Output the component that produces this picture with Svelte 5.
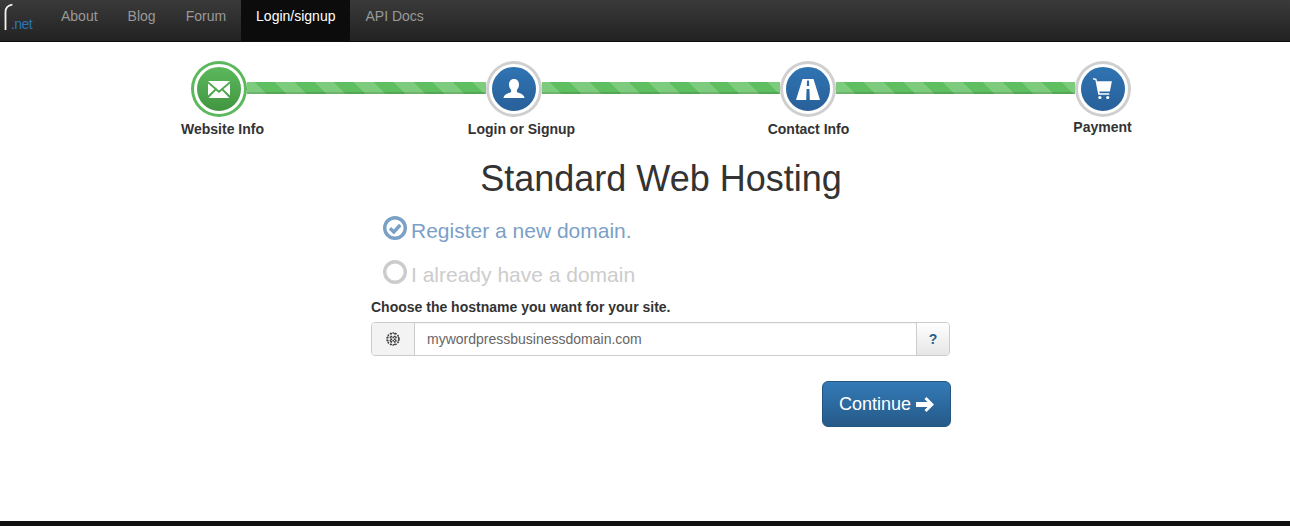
<script>
  const links = [
    { label: 'About' },
    { label: 'Blog' },
    { label: 'Forum' },
    { label: 'Login/signup', active: true },
    { label: 'API Docs' }
  ];
</script>

<div class="page">
  <nav class="navbar">
    <a class="brand" href="#top">
      <svg class="brand-r" width="14" height="32" viewBox="0 0 14 32">
        <path d="M5.5 30 V12 Q5.5 5.6 12.4 4.6" fill="none" stroke="#f2f2f2" stroke-width="1.8" />
      </svg>
      <span class="brand-net">.net</span>
    </a>
    {#each links as link}
      <a class="nav-link" class:active={link.active} href="#top">{link.label}</a>
    {/each}
  </nav>

  <div class="wizard">
    <div class="step">
      <div class="badge done">
        <div class="disc">
          <svg width="22" height="17" viewBox="0 0 22 17">
            <path fill="#fff" d="M0 0 H22 L11 9.5 Z M0 2.4 L6.6 8.2 L0 14.4 Z M22 2.4 L15.4 8.2 L22 14.4 Z M7.9 9.4 L11 12 L14.1 9.4 L21.4 17 H.6 Z" />
          </svg>
        </div>
      </div>
      <span class="step-label website">Website Info</span>
    </div>
    <div class="bar"></div>
    <div class="step">
      <div class="badge">
        <div class="disc">
          <svg width="22" height="20" viewBox="0 0 22 20">
            <path fill="#fff" d="M11 0 C14.4 0 16 2.5 16 5.6 C16 8 15 9.8 13.9 10.9 V13 C15.5 14.2 21 14.8 21.5 19 H.5 C1 14.8 6.5 14.2 8.1 13 V10.9 C7 9.8 6 8 6 5.6 C6 2.5 7.6 0 11 0 Z" />
          </svg>
        </div>
      </div>
      <span class="step-label login">Login or Signup</span>
    </div>
    <div class="bar"></div>
    <div class="step">
      <div class="badge">
        <div class="disc">
          <svg width="24" height="21" viewBox="0 0 24 21">
            <path fill="#fff" fill-rule="evenodd" d="M6.5 0 H17.5 L24 21 H13.8 L13.4 10 H10.6 L10.2 21 H0 Z M11 1.5 L10.8 7 H13.2 L13 1.5 Z" />
          </svg>
        </div>
      </div>
      <span class="step-label contact">Contact Info</span>
    </div>
    <div class="bar"></div>
    <div class="step">
      <div class="badge">
        <div class="disc">
          <svg width="19" height="22" viewBox="0 0 18 21">
            <path fill="#fff" d="M0 0 L3.2 .8 L3.8 3 H18 L16 13 H6 L6.3 14.6 H15.5 V16 H5 L2.2 2 L0 1.5 Z" />
            <circle cx="6.5" cy="18.6" r="1.5" fill="#fff" />
            <circle cx="14" cy="18.6" r="1.5" fill="#fff" />
          </svg>
        </div>
      </div>
      <span class="step-label payment">Payment</span>
    </div>
  </div>

  <main class="content">
    <h1>Standard Web Hosting</h1>

    <div class="choice selected">
      <svg width="24" height="24" viewBox="0 0 24 24">
        <circle cx="12" cy="12" r="10.3" fill="none" stroke="#7ba0c6" stroke-width="3.4" />
        <path d="M7 12.2 L10.8 16 L17.2 9" fill="none" stroke="#7ba0c6" stroke-width="3.4" />
      </svg>
      <span>Register a new domain.</span>
    </div>
    <div class="choice last">
      <svg width="24" height="24" viewBox="0 0 24 24">
        <circle cx="12" cy="12" r="10.3" fill="none" stroke="#cccccc" stroke-width="3.4" />
      </svg>
      <span>I already have a domain</span>
    </div>

    <label class="field-label" for="hostname">Choose the hostname you want for your site.</label>
    <div class="input-group">
      <span class="addon globe">
        <svg width="14" height="14" viewBox="0 0 14 14">
          <circle cx="7" cy="7" r="6" fill="none" stroke="#444" stroke-width="1.6" stroke-dasharray="1.6 1.1" />
          <path d="M1 5.4 H13 M1 8.6 H13 M5.2 1 V13 M8.8 1 V13" fill="none" stroke="#444" stroke-width="1.6" stroke-dasharray="1.6 1.1" />
        </svg>
      </span>
      <input id="hostname" type="text" value="mywordpressbusinessdomain.com" />
      <button class="addon help" type="button">?</button>
    </div>

    <div class="actions">
      <button class="continue" type="button">
        Continue
        <svg width="18" height="15" viewBox="0 0 18 15">
          <path fill="#fff" d="M10.5 0 L18 7.5 L10.5 15 L8.5 13 L11.5 10 H0 V5 H11.5 L8.5 2 Z" />
        </svg>
      </button>
    </div>
  </main>

  <footer class="footer"></footer>
</div>

<style>
  :global(body) {
    margin: 0;
    background: #fff;
    font-family: "Liberation Sans", Arial, sans-serif;
    color: #333;
  }

  .page {
    display: flex;
    flex-direction: column;
    min-height: 100vh;
  }

  /* Top bar */
  .navbar {
    display: flex;
    height: 41px;
    flex-shrink: 0;
    background: linear-gradient(to bottom, #3a3a3a, #222);
    border-bottom: 1px solid #0d0d0d;
  }

  .brand {
    display: flex;
    width: 46px;
    text-decoration: none;
  }

  .brand-r {
    flex-shrink: 0;
  }

  .brand-net {
    margin: 16px 0 0 -3px;
    font-size: 14px;
    line-height: 16px;
    letter-spacing: -0.6px;
    color: #2a76b4;
  }

  .nav-link {
    padding: 6px 15px 15px;
    font-size: 14px;
    line-height: 20px;
    color: #999;
    text-decoration: none;
  }

  .nav-link.active {
    background: #0c0c0c;
    color: #fff;
  }

  /* Steps */
  .wizard {
    display: flex;
    padding: 19px 0 0 191px;
    height: 78px;
    flex-shrink: 0;
  }

  .step {
    display: flex;
    flex-direction: column;
    align-items: center;
    width: 56px;
    flex-shrink: 0;
  }

  .badge {
    box-sizing: border-box;
    width: 56px;
    height: 56px;
    padding: 3px;
    border-radius: 50%;
    background: #cfcfcf;
    flex-shrink: 0;
  }

  .badge.done {
    background: #5cb85c;
  }

  .disc {
    box-sizing: border-box;
    display: flex;
    align-items: center;
    justify-content: center;
    width: 50px;
    height: 50px;
    border: 3px solid #fff;
    border-radius: 50%;
    background: linear-gradient(to bottom, #2f74b1, #28609a);
  }

  .done .disc {
    background: linear-gradient(to bottom, #5cb85c, #419641);
  }

  .bar {
    width: 238.5px;
    height: 12px;
    margin-top: 21px;
    flex-shrink: 0;
    box-shadow: inset 0 -2px 0 rgba(0, 0, 0, 0.12);
    background-color: #5fbe5f;
    background-image: repeating-linear-gradient(
      45deg,
      #7dcb7d 0,
      #7dcb7d 14px,
      #5fbe5f 14px,
      #5fbe5f 28px
    );
  }

  .step-label {
    margin-top: 2px;
    font-size: 14px;
    line-height: 20px;
    font-weight: bold;
    white-space: nowrap;
  }

  .step-label.website {
    margin-left: 7px;
  }

  .step-label.login {
    margin-left: 16px;
  }

  .step-label.contact {
    margin-left: 1px;
  }

  .step-label.payment {
    margin-top: 0;
  }

  /* Form */
  .content {
    width: 580px;
    margin-left: 371px;
  }

  h1 {
    margin: 18px 0 0;
    font-size: 36px;
    line-height: 44px;
    font-weight: 500;
    text-align: center;
    color: #333;
  }

  .choice {
    display: flex;
    gap: 4px;
    height: 44px;
    padding-left: 12px;
    font-size: 21px;
    line-height: 30px;
    color: #ccc;
  }

  .choice svg {
    flex-shrink: 0;
  }

  .choice.selected {
    margin-top: 15px;
    color: #7ba0c6;
  }

  .choice.last {
    height: 37px;
  }

  .field-label {
    display: block;
    font-size: 14px;
    line-height: 20px;
    font-weight: bold;
  }

  .input-group {
    box-sizing: border-box;
    display: flex;
    width: 579px;
    height: 34px;
    margin-top: 5px;
    border: 1px solid #ccc;
    border-radius: 4px;
    overflow: hidden;
    box-shadow: inset 0 1px 1px rgba(0, 0, 0, 0.05);
  }

  .addon {
    display: flex;
    align-items: center;
    justify-content: center;
    flex-shrink: 0;
    background: #eee;
    border: 0;
  }

  .globe {
    width: 43px;
    border-right: 1px solid #ccc;
    background: #f3f3f3;
    box-sizing: border-box;
  }

  .help {
    width: 33px;
    padding: 0;
    border-left: 1px solid #ccc;
    background: linear-gradient(to bottom, #fff, #e6e6e6);
    font-family: inherit;
    font-size: 14px;
    font-weight: bold;
    color: #2a6085;
  }

  input {
    flex: 1;
    min-width: 0;
    padding: 0 12px;
    border: 0;
    outline: 0;
    background: transparent;
    font-family: inherit;
    font-size: 14px;
    color: #666;
  }

  .actions {
    display: flex;
    justify-content: flex-end;
    margin-top: 25px;
  }

  .continue {
    display: flex;
    align-items: center;
    gap: 5px;
    width: 129px;
    height: 46px;
    padding: 0 0 0 16px;
    border: 1px solid #245580;
    border-radius: 6px;
    background: linear-gradient(to bottom, #337ab7, #265a88);
    font-family: inherit;
    font-size: 18px;
    color: #fff;
  }

  .footer {
    height: 5px;
    margin-top: auto;
    background: #111;
  }
</style>
